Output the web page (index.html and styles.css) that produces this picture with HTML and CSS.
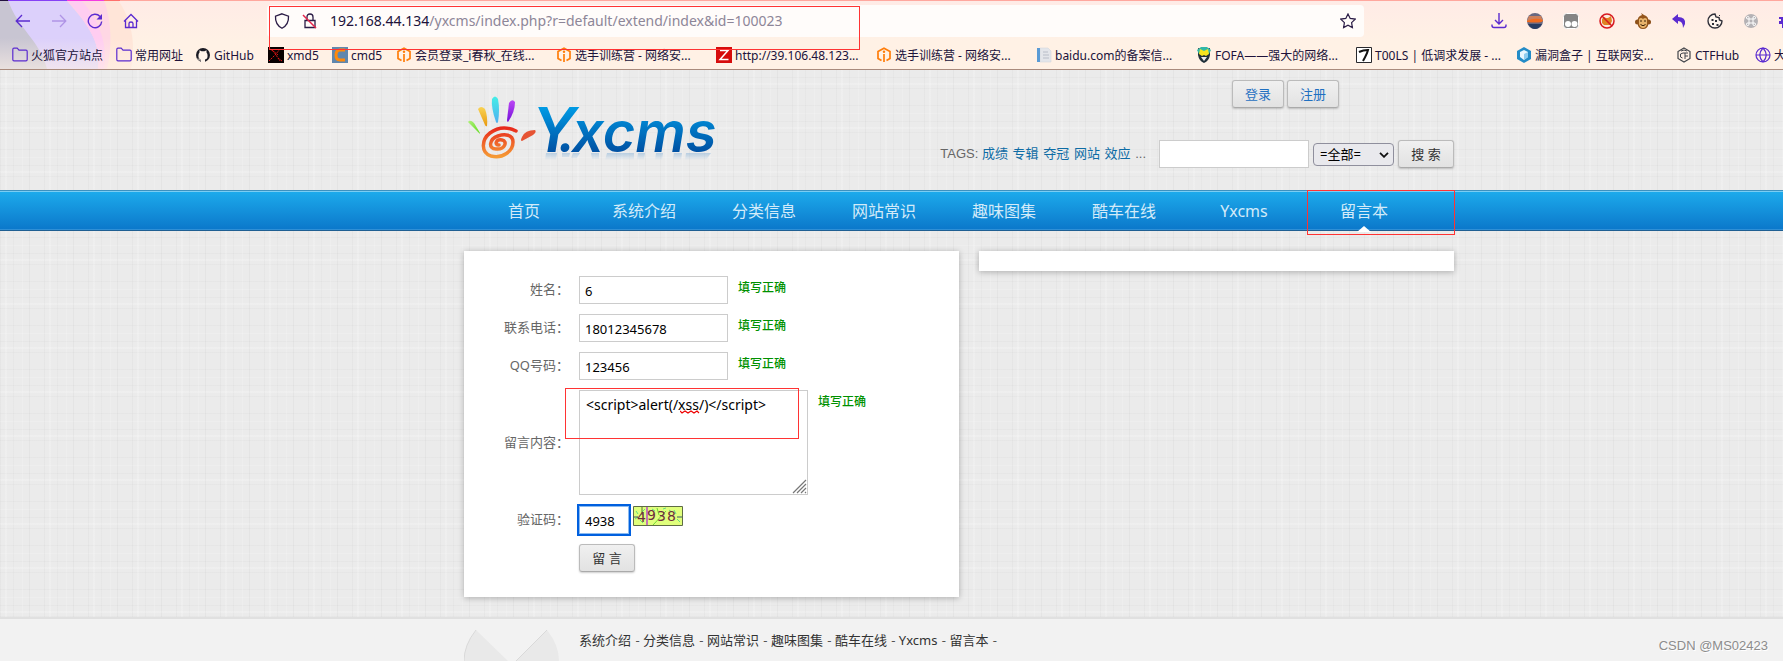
FILE: index.html
```html
<!DOCTYPE html>
<html lang="zh-CN">
<head>
<meta charset="utf-8">
<title>留言本 - Yxcms</title>
<link rel="stylesheet" href="styles.css">
</head>
<body>
<svg width="0" height="0" class="defs" aria-hidden="true">
  <defs>
    <symbol id="folder" viewBox="0 0 16 16"><path d="M.8 12.500V2.500Q.8 1.200 2 1.200H5.200L7 3.200H14Q15.200 3.200 15.200 4.500V12.500Q15.200 13.800 14 13.800H2Q.8 13.800.8 12.500Z" fill="none" stroke="#5b2bd0" stroke-width="1.200"/></symbol>
    <symbol id="ichunqiu" viewBox="0 0 16 16"><path d="M5.500 13.500L2 11.500V4.500L8 1.200L14 4.500V11.500L10.500 13.500M8 7V15" fill="none" stroke="#ff7d0a" stroke-width="1.700"/><circle cx="8" cy="4.800" r="1.200" fill="#ff7d0a"/></symbol>
  </defs>
</svg>

<div class="browser">
  <svg class="theme" width="150" height="69" viewBox="0 0 150 69" aria-hidden="true">
    <defs><linearGradient id="fade" x2="0" y2="1"><stop offset=".55" stop-color="#fff2e6" stop-opacity="0"/><stop offset="1" stop-color="#fff2e6" stop-opacity=".6"/></linearGradient></defs>
    <path d="M0 0H118C132 20 136 45 131 69H0Z" fill="#ffe5d8"/>
    <path d="M0 0H104C112 22 112 48 107 69H0Z" fill="#ffd7e4"/>
    <path d="M0 0H66C86 22 102 42 98 69H0Z" fill="#dcd0fb"/>
    <path d="M68 1H82C100 22 108 45 104 69H98C102 42 86 22 68 1Z" fill="#ffcdf1"/>
    <path d="M0 0H8C17 28 40 40 47 69H0Z" fill="#c8c5d2"/>
    <path d="M0 0H150V69H0Z" fill="url(#fade)"/>
    <path d="M0 0H8V1H0Z" fill="#22103f"/><path d="M8 0H67V1H8Z" fill="#8541f5"/><path d="M67 0H104V1H67Z" fill="#f43be0"/><path d="M104 0H120V1H104Z" fill="#ff706b"/>
  </svg>
  <div class="toolbar">
    <div class="nav-buttons">
      <button class="tool" aria-label="后退"><svg viewBox="0 0 16 16"><path d="M15 8H1.500M7 2L1.200 8L7 14" fill="none" stroke="#5b2bd0" stroke-width="1.300"/></svg></button>
      <button class="tool" aria-label="前进"><svg viewBox="0 0 16 16"><path d="M1 8H14.500M9 2L14.800 8L9 14" fill="none" stroke="#b094e6" stroke-width="1.300"/></svg></button>
      <button class="tool" aria-label="刷新"><svg viewBox="0 0 16 16"><path d="M13 3.500A6.700 6.700 0 1 0 14.700 8.500" fill="none" stroke="#5b2bd0" stroke-width="1.400"/><path d="M15 1V6.500H9.500Z" fill="#5b2bd0"/></svg></button>
      <button class="tool" aria-label="主页"><svg viewBox="0 0 16 16"><path d="M1 8.500L8 1.500L15 8.500M2.500 7.500V14.500H13.500V7.500M6 14V10.500Q6 9 8 9T10 10.500V14" fill="none" stroke="#5b2bd0" stroke-width="1.300"/></svg></button>
    </div>
    <div class="urlbar">
      <svg class="icon" viewBox="0 0 16 16"><path d="M8 .8L14.500 3.200Q15 11.500 8 15.200Q1 11.500 1.500 3.200Z" fill="none" stroke="#2b1c46" stroke-width="1.300"/></svg>
      <svg class="icon" viewBox="0 0 16 16"><path d="M3 7.500H13V14.500H3ZM5 7V4Q5 1 8 1T11 4V7" fill="none" stroke="#2b1c46" stroke-width="1.300"/><path d="M1 2L14 15" stroke="#e5254c" stroke-width="1.500"/></svg>
      <span class="address">192.168.44.134<span class="path">/yxcms/index.php?r=default/extend/index&amp;id=100023</span></span>
      <svg class="icon" viewBox="0 0 16 16"><path d="M8 .9L10.200 5.400L15.200 6.100L11.600 9.600L12.400 14.600L8 12.300L3.600 14.600L4.400 9.600L.8 6.100L5.800 5.400Z" fill="none" stroke="#2b1c46" stroke-width="1.200"/></svg>
      <span class="mark mark-url"></span>
    </div>
    <div class="extensions">
      <button class="tool" aria-label="下载"><svg viewBox="0 0 16 16"><path d="M8 0V11M4 7L8 11L12 7M1 11.500V12.500Q1 14.500 3 14.500H13Q15 14.500 15 12.500V11.500" fill="none" stroke="#5b2bd0" stroke-width="1.400"/></svg></button>
      <svg class="icon" viewBox="0 0 16 16"><circle cx="8" cy="8" r="8" fill="#686881"/><path d="M2 3H14L16 8H0Z" fill="#cc805c"/><path d="M0 8Q8 4 16 7L15 9Q8 10 0 9Z" fill="#f06b20"/><path d="M1 11H15Q12 16 8 16T1 11Z" fill="#273c63"/></svg>
      <svg class="icon" viewBox="0 0 16 16"><rect x=".5" y=".5" width="15" height="15" rx="3" fill="#858585" stroke="#fff"/><circle cx="5" cy="11" r="3" fill="#fff"/><circle cx="11.500" cy="11" r="3" fill="#fff"/></svg>
      <svg class="icon" viewBox="0 0 16 16"><circle cx="8" cy="8" r="7" fill="#fce9df" stroke="#d71920" stroke-width="1.500"/><path d="M3 6L5 4L7 5L9 5L12 3L13 8L11 12H5L3 10Z" fill="#df8323"/><path d="M3 3L13 13" stroke="#d71920" stroke-width="1.500"/></svg>
      <svg class="icon" viewBox="0 0 16 16"><circle cx="2.500" cy="9" r="2.500" fill="#8c501a"/><circle cx="13.500" cy="9" r="2.500" fill="#8c501a"/><path d="M6 0L9 2Q14 3 13.500 10Q13 16 8 16T2.500 10Q2 3 7 2Z" fill="#94561d"/><path d="M4 6Q6 4 8 6Q10 4 12 6V11Q11 15 8 15T4 11Z" fill="#e7b36c"/><path d="M6 7V9M10 7V9M5.500 11.500Q8 14 10.500 11.500" stroke="#382008" fill="none"/></svg>
      <svg class="icon" viewBox="0 0 16 16"><path d="M1 6L7 1V4Q15 4 14 11L12 15Q12 8 7 8V11Z" fill="#5b2bd0"/></svg>
      <svg class="icon" viewBox="0 0 16 16"><path d="M8 1A7 7 0 1 0 15 8L12.500 7L12 4.500L9 4Z" fill="#fff5ee" stroke="#30303a" stroke-width="1.400"/><path d="M4.500 6H6.500V8H4.500ZM8 7H10V9H8ZM5 10H7V12H5ZM9.500 11H11.500V13H9.500ZM12 2H13V3H12Z" fill="#30303a"/></svg>
      <svg class="icon" viewBox="0 0 16 16"><circle cx="8" cy="8" r="7" fill="#b5b2b5"/><path d="M6 6H10V10H6ZM6 6H5A1.300 1.300 0 1 1 6 4.500ZM10 6V5A1.300 1.300 0 1 1 11 6ZM10 10H11A1.300 1.300 0 1 1 10 11ZM6 10V11A1.300 1.300 0 1 1 5 10Z" fill="none" stroke="#fff"/></svg>
      <svg class="icon" viewBox="0 0 16 16"><path d="M5 0H9V3H14V15H3V11H0V8H2V6H0V4H5Z" fill="#5b2bd0"/></svg>
    </div>
  </div>
  <nav class="bookmarks" aria-label="书签">
    <a href="#"><svg class="icon"><use href="#folder"/></svg><span>火狐官方站点</span></a>
    <a href="#"><svg class="icon"><use href="#folder"/></svg><span>常用网址</span></a>
    <a href="#"><svg class="icon" viewBox="0 0 16 16"><circle cx="8" cy="8" r="7" fill="#1b1b24"/><path d="M6 15V12.500Q3 12 3.500 8Q3.500 6.500 4.500 5.500V3.200L6.500 4.300H9.500L11.500 3.200V5.500Q12.500 6.500 12.500 8Q13 12 10 12.500V15Z" fill="#fff4ea"/><path d="M6 13Q4 13.500 3 11.500" fill="none" stroke="#fff4ea"/></svg><span>GitHub</span></a>
    <a href="#"><svg class="icon" viewBox="0 0 16 16"><path d="M0 0H16V16H0Z" fill="#080000"/><path d="M2 2L6 5L12 14M12 2L8 7L5 10L1 14M4 3L10 8M10 11L14 14" stroke="#df1515" stroke-dasharray="2 1" fill="none"/></svg><span>xmd5</span></a>
    <a href="#"><svg class="icon" viewBox="0 0 16 16"><path d="M0 0H16V16H0Z" fill="#6087ae"/><path d="M13 3H8Q4 3 4 8T8 13H13" fill="none" stroke="#ff8a0b" stroke-width="3"/></svg><span>cmd5</span></a>
    <a href="#"><svg class="icon"><use href="#ichunqiu"/></svg><span>会员登录_i春秋_在线...</span></a>
    <a href="#"><svg class="icon"><use href="#ichunqiu"/></svg><span>选手训练营 - 网络安...</span></a>
    <a href="#"><svg class="icon" viewBox="0 0 16 16"><path d="M0 0H16V16H0Z" fill="#d60c0c"/><path d="M4 3.500H12L4 12.500H12.500" fill="none" stroke="#fff" stroke-width="1.500"/></svg><span>http://39.106.48.123...</span></a>
    <a href="#"><svg class="icon"><use href="#ichunqiu"/></svg><span>选手训练营 - 网络安...</span></a>
    <a href="#"><svg class="icon" viewBox="0 0 16 16"><path d="M4 1H12L15 4V15H4Z" fill="#e3e5ea" stroke="#d3d6dd" stroke-width=".6"/><path d="M1 1H4V15H1Z" fill="#5a9bd5"/><path d="M7 5H12M7 8H13M7 11H13" stroke="#b8bdc8"/></svg><span>baidu.com的备案信...</span></a>
    <a href="#"><svg class="icon" viewBox="0 0 16 16"><path d="M2 1L8 3L14 1V8Q13 14 8 16Q3 14 2 8Z" fill="#203039"/><path d="M1 3L5 0H11L15 3L13 7H3Z" fill="#31b7a7"/><path d="M4 2L8 4L12 2L13 7L10 9L8 8L6 9L3 7Z" fill="#f6e51e"/><path d="M5 10H11L8 14Z" fill="#eee"/></svg><span>FOFA——强大的网络...</span></a>
    <a href="#"><svg class="icon" viewBox="0 0 16 16"><path d="M.5.500H15.500V15.500H.5Z" fill="#fff" stroke="#29292d"/><path d="M3 5Q7 3 12 3Q11 7 7 14" fill="none" stroke="#111" stroke-width="2"/></svg><span>T00LS | 低调求发展 - ...</span></a>
    <a href="#"><svg class="icon" viewBox="0 0 16 16"><path d="M8 0L15 4V12L8 16L1 12V4Z" fill="#238cc7"/><path d="M8 3L12 5V10L8 13L4 10V5Z" fill="#e8f7ff"/><path d="M8 7L12 5V10L8 13Z" fill="#8fcdf0"/></svg><span>漏洞盒子 | 互联网安...</span></a>
    <a href="#"><svg class="icon" viewBox="0 0 16 16"><path d="M8 1L14 4.500V11.500L8 15L2 11.500V4.500Z" fill="none" stroke="#42454a" stroke-width="1.200"/><path d="M7 6L4.500 7V10L6.500 11M7 6H12M9 6V12M9 9H12M5 4L8 3L11 4" fill="none" stroke="#42454a"/></svg><span>CTFHub</span></a>
    <a href="#"><svg class="icon" viewBox="0 0 16 16"><path d="M8 1A7 7 0 1 0 8 15A7 7 0 1 0 8 1ZM8 1Q1.500 8 8 15Q14.500 8 8 1M1 8H15" fill="none" stroke="#5b2bd0" stroke-width="1.200"/></svg><span>大</span></a>
  </nav>
</div>

<header class="wrap header">
  <svg class="logo" width="270" height="75" viewBox="460 90 270 75" role="img" aria-label="Y.xcms">
    <defs>
      <linearGradient id="blue" gradientUnits="userSpaceOnUse" x1="0" y1="107" x2="0" y2="152"><stop stop-color="#009be5"/><stop offset="1" stop-color="#0050a2"/></linearGradient>
      <linearGradient id="orange" x2="0" y2="1"><stop stop-color="#e8291c"/><stop offset="1" stop-color="#f59a35"/></linearGradient>
      <linearGradient id="green" x2="1" y2="1"><stop stop-color="#aff07b"/><stop offset="1" stop-color="#61dc1c"/></linearGradient>
      <linearGradient id="gold" x2="0" y2="1"><stop stop-color="#f9d354"/><stop offset="1" stop-color="#e89a10"/></linearGradient>
      <linearGradient id="cyan" x2="0" y2="1"><stop stop-color="#45eee7"/><stop offset="1" stop-color="#4faff0"/></linearGradient>
      <linearGradient id="violet" x2="0" y2="1"><stop stop-color="#bd47f5"/><stop offset="1" stop-color="#7411d9"/></linearGradient>
      <linearGradient id="glint" gradientUnits="userSpaceOnUse" x1="0" y1="152" x2="0" y2="160"><stop stop-color="#77a9d6" stop-opacity=".5"/><stop offset="1" stop-color="#77a9d6" stop-opacity="0"/></linearGradient>
    </defs>
    <path d="M468 122Q470 119 474 123L480 133Q480 134 479 133Z" fill="url(#green)"/>
    <path d="M478 109Q481 105 485 109Q488 117 487 126Q486 127 485 125Z" fill="url(#gold)"/>
    <path d="M492 99Q495 94 498 99Q500 110 498 122Q497 124 496 122Q491 108 492 99Z" fill="url(#cyan)"/>
    <path d="M509 103Q512 98 515 102Q515 112 508 122Q507 122 507 120Z" fill="url(#violet)"/>
    <path d="M522 137Q525 130 535 130Q537 132 533 135L522 141Q520 141 522 137Z" fill="#e65434"/>
    <path d="M516 131Q502 124 490 133C481 140 481 153 491 156C503 159 513 151 513 142C513 134 504 134 498 136C489 139 488 149 496 149C505 150 508 141 502 140C496 139 494 145 499 145" fill="none" stroke="url(#orange)" stroke-width="3.500" stroke-linecap="round"/>
    <text class="wordmark" fill="url(#blue)" y="152"><tspan class="cap" x="532">Y</tspan><tspan x="558">.</tspan><tspan x="572">xcms</tspan></text>
    <path d="M546 153H557L556 160H545ZM562 153H570L569 157H562ZM573 153H580L577 158H571ZM591 153H599V159H592ZM607 153H634V160H605ZM638 153H645L644 160H637ZM656 153H663L662 160H655ZM674 153H682L681 160H673ZM686 153H711L706 160H685Z" fill="url(#glint)"/>
  </svg>
  <div class="header-side">
    <div class="account"><a class="btn link" href="#">登录</a><a class="btn link" href="#">注册</a></div>
    <form class="search">
      <span class="tags">TAGS: <a href="#">成绩</a> <a href="#">专辑</a> <a href="#">夺冠</a> <a href="#">网站</a> <a href="#">效应</a> ...</span>
      <input class="field keyword" type="text" aria-label="关键词">
      <span class="picker"><select aria-label="分类"><option>=全部=</option></select><svg width="10" height="6" viewBox="0 0 10 6"><path d="M1 .8L5 4.800L9 .8" fill="none" stroke="#111" stroke-width="1.800"/></svg></span>
      <button class="btn submit" type="button">搜 索</button>
    </form>
  </div>
</header>

<nav class="menu">
  <div class="wrap menu-items">
    <a href="#">首页</a><a href="#">系统介绍</a><a href="#">分类信息</a><a href="#">网站常识</a><a href="#">趣味图集</a><a href="#">酷车在线</a><a href="#">Yxcms</a><a class="current" href="#">留言本</a>
    <span class="mark mark-menu"></span>
  </div>
</nav>

<main class="wrap main">
  <form class="panel guestbook">
    <div class="row"><label for="name">姓名：</label><input class="field" id="name" type="text" value="6"><span class="ok">填写正确</span></div>
    <div class="row"><label for="tel">联系电话：</label><input class="field" id="tel" type="text" value="18012345678"><span class="ok">填写正确</span></div>
    <div class="row"><label for="qq">QQ号码：</label><input class="field" id="qq" type="text" value="123456"><span class="ok">填写正确</span></div>
    <div class="row"><label for="content">留言内容：</label>
      <div class="area"><textarea class="field" id="content" spellcheck="false">&lt;script&gt;alert(/xss/)&lt;/script&gt;</textarea>
        <svg class="squiggle" width="20" height="4" viewBox="0 0 20 4"><path d="M0 1L2 3L5 1L8 3L11 1L14 3L17 1L19 3" fill="none" stroke="#e00" stroke-width="1.200"/></svg>
        <svg class="grip" width="15" height="15" viewBox="0 0 15 15"><path d="M1 14L14 1M5 14L14 5M9 14L14 9M13 14L14 13" stroke="#777" stroke-width="1.200"/></svg>
        <span class="mark mark-area"></span></div>
      <span class="ok">填写正确</span></div>
    <div class="row code-row"><label for="code">验证码：</label><input class="field code" id="code" type="text" value="4938">
      <svg class="captcha" width="50" height="20" viewBox="0 0 50 20" role="img" aria-label="4938"><path d="M.5.500H49.500V19.500H.5Z" fill="#e0ff7c" stroke="#5f6c45"/><path d="M3 5L5 8M7 14L10 17M12 3L9 6M19 3L22 5M36 4L39 6M44 13L47 16M30 3L33 2M2 13L5 11M41 4L43 8" stroke="#63dc80"/><path d="M20 19L33 5M24 2L26 9" stroke="#70d936"/><path d="M9 1V9" stroke="#59732f"/><path d="M0 11H5M44 11H49" stroke="#395a68"/><text class="captcha-text"><tspan x="4" y="16">4</tspan><tspan x="14" y="14">9</tspan><tspan x="24" y="15">3</tspan><tspan x="34" y="15">8</tspan></text><path d="M14 1V19" stroke="#b62bd2" stroke-width="1.300"/></svg></div>
    <div class="row send"><button class="btn submit" type="button">留 言</button></div>
  </form>
  <aside class="panel side"></aside>
</main>

<footer class="footer">
  <div class="wrap footer-inner">
    <svg class="emblem" width="95" height="31" viewBox="0 0 95 31" aria-hidden="true"><path d="M12 0L44 31H0Q0 15 12 0ZM83 0L52 31H95Q95 15 83 0Z" fill="#e9e9e9"/><path d="M0 31Q0 15 12 0M83 0L52 31" fill="none" stroke="#d9d9d9"/></svg>
    <p class="footer-links"><a href="#">系统介绍</a> - <a href="#">分类信息</a> - <a href="#">网站常识</a> - <a href="#">趣味图集</a> - <a href="#">酷车在线</a> - <a href="#">Yxcms</a> - <a href="#">留言本</a> -</p>
  </div>
  <span class="watermark">CSDN @MS02423</span>
</footer>
</body>
</html>
```
FILE: styles.css
```css
* { box-sizing: border-box; }
body {
  margin: 0;
  min-height: 100vh;
  display: flex;
  flex-direction: column;
  overflow-x: hidden;
  font: 13px/20px "Noto Sans", "Noto Sans CJK SC", sans-serif;
  color: #666;
  background-color: #ebebeb;
  background-image:
    repeating-linear-gradient(90deg, rgba(0,0,0,.025) 0 1px, transparent 1px 5px, rgba(255,255,255,.18) 5px 7px, transparent 7px 13px, rgba(0,0,0,.02) 13px 14px, transparent 14px 22px, rgba(255,255,255,.15) 22px 23px, transparent 23px 29px, rgba(0,0,0,.03) 29px 30px, transparent 30px 44px),
    repeating-linear-gradient(0deg, rgba(0,0,0,.02) 0 1px, transparent 1px 4px, rgba(255,255,255,.18) 4px 6px, transparent 6px 11px, rgba(0,0,0,.02) 11px 12px, transparent 12px 19px, rgba(255,255,255,.15) 19px 20px, transparent 20px 27px, rgba(0,0,0,.02) 27px 28px, transparent 28px 44px);
}
a { color: inherit; text-decoration: none; }
button, input, select, textarea { font: inherit; margin: 0; }
.defs { position: absolute; }
.icon { width: 16px; height: 16px; flex: none; display: block; }
.wrap { margin-left: 464px; max-width: 990px; position: relative; }
.mark { position: absolute; border: 1px solid #f33; pointer-events: none; z-index: 3; }

/* browser chrome */
.browser {
  position: relative;
  background: linear-gradient(#ffebe6, #fff1e5 60%);
  border-top: 1px solid #ffa79e;
  border-bottom: 1px solid #a98a7c;
  height: 70px;
  color: #20123a;
}
.theme { position: absolute; left: 0; top: -1px; }
.toolbar { position: relative; display: flex; align-items: center; padding: 4px 0 0 15px; }
.nav-buttons, .extensions { display: flex; gap: 20px; flex: none; }
.tool { width: 16px; height: 16px; padding: 0; border: 0; background: none; flex: none; }
.tool svg { display: block; width: 16px; height: 16px; }
.urlbar {
  position: relative;
  flex: 1;
  height: 32px;
  margin: 0 127px 0 128px;
  padding: 0 8px 0 7px;
  display: flex;
  align-items: center;
  gap: 12px;
  background: #fffcfa;
  border-radius: 4px;
}
.address { flex: 1; font-size: 14px; white-space: nowrap; }
.path { color: #8d8698; }
.extensions { width: 292px; overflow: hidden; }
.mark-url { left: 2px; top: 1px; width: 591px; height: 44px; }
.bookmarks {
  position: relative;
  display: grid;
  grid-template-columns: 104px 79px 73px 64px 64px repeat(8, 160px) 79px 1fr;
  padding: 10px 0 0 12px;
  height: 32px;
  overflow: hidden;
  font-size: 12px;
  line-height: 18px;
}
.bookmarks a { display: flex; gap: 3px; height: 18px; min-width: 0; white-space: nowrap; }

/* header */
.header { width: 990px; height: 120px; display: flex; justify-content: space-between; }
.logo { margin: 20px 0 0 -4px; flex: none; overflow: visible; }
.header-side { display: flex; flex-direction: column; align-items: flex-end; padding-top: 10px; gap: 32px; }
.account { display: flex; gap: 3px; margin-right: 115px; }
.btn {
  height: 28px;
  padding: 0 12px;
  border: 1px solid #bbb;
  border-bottom-color: #aaa;
  border-radius: 3px;
  background: linear-gradient(#f0f0f0, #e2e2e2);
  box-shadow: 0 1px 2px rgba(0,0,0,.2);
  line-height: 26px;
  color: #333;
}
.submit { width: 56px; padding: 0; }
.link { color: #1f70c1; }
.search { display: flex; align-items: center; gap: 4px; }
.tags { margin-right: 9px; font-family: "Liberation Sans", "Noto Sans CJK SC", sans-serif; line-height: 22px; white-space: nowrap; }
.tags a { color: #0e6ca5; margin-right: 1px; }
.field { height: 28px; width: 149px; border: 1px solid #ccc; border-radius: 0; background: #fff; padding: 2px 5px 0; color: #000; outline: none; }
.keyword { width: 150px; }
.picker { position: relative; display: flex; }
.picker select { appearance: none; width: 81px; height: 23px; border: 1px solid #8f8f9d; border-radius: 4px; background: #e9e9ed; color: #000; padding: 0 6px; line-height: 20px; }
.picker svg { position: absolute; right: 5px; top: 9px; pointer-events: none; }
.wordmark { font: italic 600 56px "Inter", sans-serif; }
.cap { font-size: 62px; }

/* menu */
.menu {
  height: 41px;
  border-top: 1px solid #3e91bf;
  border-bottom: 1px solid #1f5f92;
  background: linear-gradient(#1dabec, #0b77ca);
  box-shadow: inset 0 1px #7bcdf3, inset 0 -1px #2f8fd6;
}
.menu-items { display: flex; }
.menu-items a { position: relative; flex: 0 1 120px; text-align: center; font-size: 16px; line-height: 41px; color: #d3ebf9; white-space: nowrap; }
.current::after {
  content: "";
  position: absolute;
  left: 50%;
  bottom: 0;
  margin-left: -7px;
  border: 7px solid transparent;
  border-top: 0;
  border-bottom: 6px solid #fff;
}
.mark-menu { right: -1px; top: -1px; width: 148px; height: 45px; }

/* content */
.main { width: 990px; display: flex; align-items: flex-start; gap: 20px; padding: 20px 0; }
.panel { background: #fff; box-shadow: 0 1px 6px rgba(0,0,0,.28); }
.guestbook { flex: 495; padding: 25px 0; display: flex; flex-direction: column; gap: 10px; }
.side { flex: 475; height: 20px; }
.row { display: flex; align-items: flex-start; }
.row label { width: 105px; margin-right: 10px; padding-bottom: 2px; align-self: center; text-align: right; }
.ok { margin: 2px 0 0 10px; font-size: 12px; font-weight: 500; color: #009100; }
.area { position: relative; display: flex; }
.area textarea { width: 229px; height: 105px; resize: none; padding: 4px 6px; font-size: 14px; line-height: 20px; }
.squiggle { position: absolute; left: 101px; top: 20px; }
.grip { position: absolute; right: 1px; bottom: 1px; }
.mark-area { left: -14px; top: -2px; width: 234px; height: 51px; }
.code { width: 50px; outline: 2px solid #0060df; border-color: #8abaf0; }
.code-row { padding-top: 1px; }
.captcha { margin-left: 4px; }
.captcha-text { font: 14px "DejaVu Sans", sans-serif; fill: #6d2e3d; }
.send { padding-left: 115px; }

/* footer */
.footer { position: relative; flex: 1; border-top: 2px solid #e0e0e0; background: #f2f2f2; }
.footer-inner { display: flex; align-items: flex-start; padding-top: 11px; gap: 20px; }
.emblem { flex: none; }
.footer-links { margin: 0; color: #555; white-space: nowrap; }
.footer-links a { color: #333; margin-right: 1px; }
.watermark {
  position: absolute;
  right: 15px;
  bottom: 5px;
  font: 13px/20px "Liberation Sans", sans-serif;
  color: #8c8c8c;
  text-shadow: 1px 1px #fff;
}
```
